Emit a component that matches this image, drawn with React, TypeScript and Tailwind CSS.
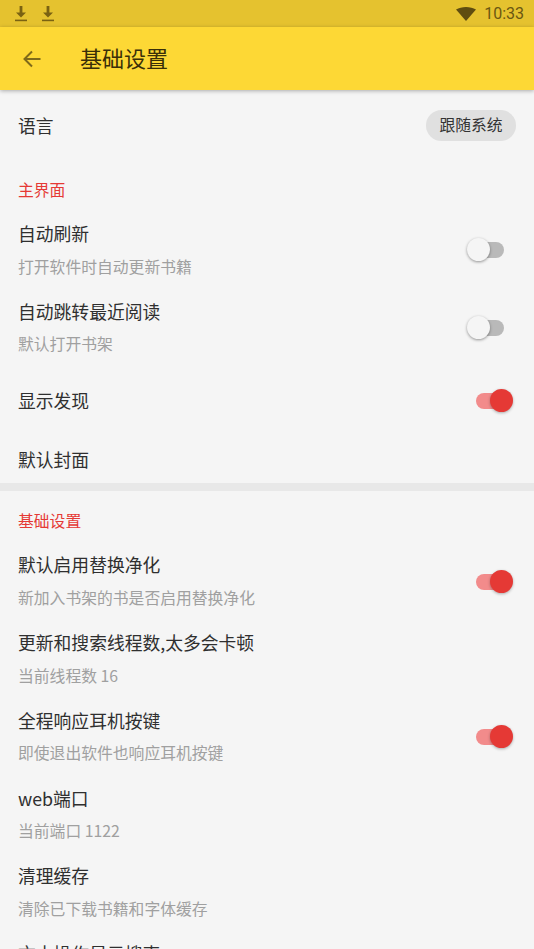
const Toggle = ({ on }: { on: boolean }) => {
  if (on) {
    return (
      <div className="relative w-[37px] h-[24px] mt-[1px] shrink-0">
        <div className="absolute left-0 top-[4px] w-[32px] h-[16px] rounded-full bg-[#f28b8b]" />
        <div className="absolute right-0 top-0 w-[23px] h-[23px] rounded-full bg-[#e53935] shadow-[0_1px_3px_rgba(0,0,0,0.3)]" />
      </div>
    );
  }
  return (
    <div className="relative w-[37px] h-[24px] mr-[9px] shrink-0">
      <div className="absolute right-0 top-[4px] w-[32px] h-[16px] rounded-full bg-[#b9b9b9]" />
      <div className="absolute left-0 top-0 w-[23px] h-[23px] rounded-full bg-[#f5f5f5] shadow-[0_1px_3px_rgba(0,0,0,0.4)]" />
    </div>
  );
};

const Row = ({ title, sub, toggle }: { title: string; sub: string; toggle?: boolean }) => (
  <div className="h-[77.7px] shrink-0 flex items-center justify-between pl-[18px] pr-[21px]">
    <div className="flex flex-col pb-[1px]">
      <div className="text-[17.8px] leading-[26px] text-[#2f2f2f]">{title}</div>
      <div className="text-[15.8px] leading-[24px] mt-[8.5px] text-[#a0a0a0]">{sub}</div>
    </div>
    {toggle !== undefined && <Toggle on={toggle} />}
  </div>
);

const DownloadIcon = () => (
  <svg width="14" height="16" viewBox="0 0 14 16" fill="#7a6212">
    <path d="M5.6 0h2.8v6.4H12L7 11.4 2 6.4h3.6z" />
    <rect x="1" y="13.6" width="12" height="1.6" />
  </svg>
);

export default function App() {
  return (
    <div className="w-[534px] h-[949px] overflow-hidden bg-[#f5f5f5] flex flex-col font-['Noto_Sans_CJK_SC','Noto_Sans',sans-serif]">
      <div className="h-[27px] shrink-0 bg-[#e5c22f] flex items-center justify-between pl-[14px] pr-[10px]">
        <div className="flex gap-[13px]">
          <DownloadIcon />
          <DownloadIcon />
        </div>
        <div className="flex items-center gap-[8px]">
          <svg width="20" height="14" viewBox="0 0 20 14" fill="#5f4d10">
            <path d="M0 2.6C2.8 0.9 6.2 0 10 0s7.2.9 10 2.6L10 14z" />
          </svg>
          <span className="font-['Roboto',sans-serif] text-[16px] text-[#6b5712]">10:33</span>
        </div>
      </div>

      <div className="relative z-10 h-[63px] shrink-0 bg-[#fdd835] shadow-[0_1px_4px_rgba(0,0,0,0.3)] flex items-center pl-[23px]">
        <svg width="18" height="18" viewBox="0 0 18 18" fill="none" stroke="#7f6a1a" strokeWidth="2">
          <path d="M17.5 9H2M9 1.5 1.5 9 9 16.5" />
        </svg>
        <div className="ml-[39px] text-[22px] leading-[30px] pb-[3px] text-[#3a2f08]">基础设置</div>
      </div>

      <div className="h-[71px] shrink-0 flex items-center justify-between pl-[18px] pr-[18px]">
        <div className="text-[17.8px] text-[#2f2f2f]">语言</div>
        <div className="h-[31px] w-[90px] mb-[1px] rounded-full bg-[#e0e0e0] flex items-center justify-center text-[15.8px] text-[#333333]">
          跟随系统
        </div>
      </div>

      <div className="h-[50px] shrink-0 pl-[18px] pt-[7px] flex items-center text-[15.8px] text-[#e53935]">主界面</div>

      <Row title="自动刷新" sub="打开软件时自动更新书籍" toggle={false} />
      <Row title="自动跳转最近阅读" sub="默认打开书架" toggle={false} />

      <div className="h-[68px] shrink-0 flex items-center justify-between pl-[18px] pr-[21px]">
        <div className="text-[17.8px] text-[#2f2f2f]">显示发现</div>
        <Toggle on />
      </div>
      <div className="h-[49px] shrink-0 flex items-center pl-[18px] text-[17.8px] text-[#2f2f2f]">默认封面</div>

      <div className="h-[8px] shrink-0 bg-[#e8e8e8]" />

      <div className="h-[51px] shrink-0 pl-[18px] pt-[8px] flex items-center text-[15.8px] text-[#e53935]">基础设置</div>

      <Row title="默认启用替换净化" sub="新加入书架的书是否启用替换净化" toggle />
      <Row title="更新和搜索线程数,太多会卡顿" sub="当前线程数 16" />
      <Row title="全程响应耳机按键" sub="即使退出软件也响应耳机按键" toggle />
      <Row title="web端口" sub="当前端口 1122" />
      <Row title="清理缓存" sub="清除已下载书籍和字体缓存" />
      <Row title="文本操作显示搜索" sub="长按文字在操作菜单中显示搜索" toggle />
    </div>
  );
}
